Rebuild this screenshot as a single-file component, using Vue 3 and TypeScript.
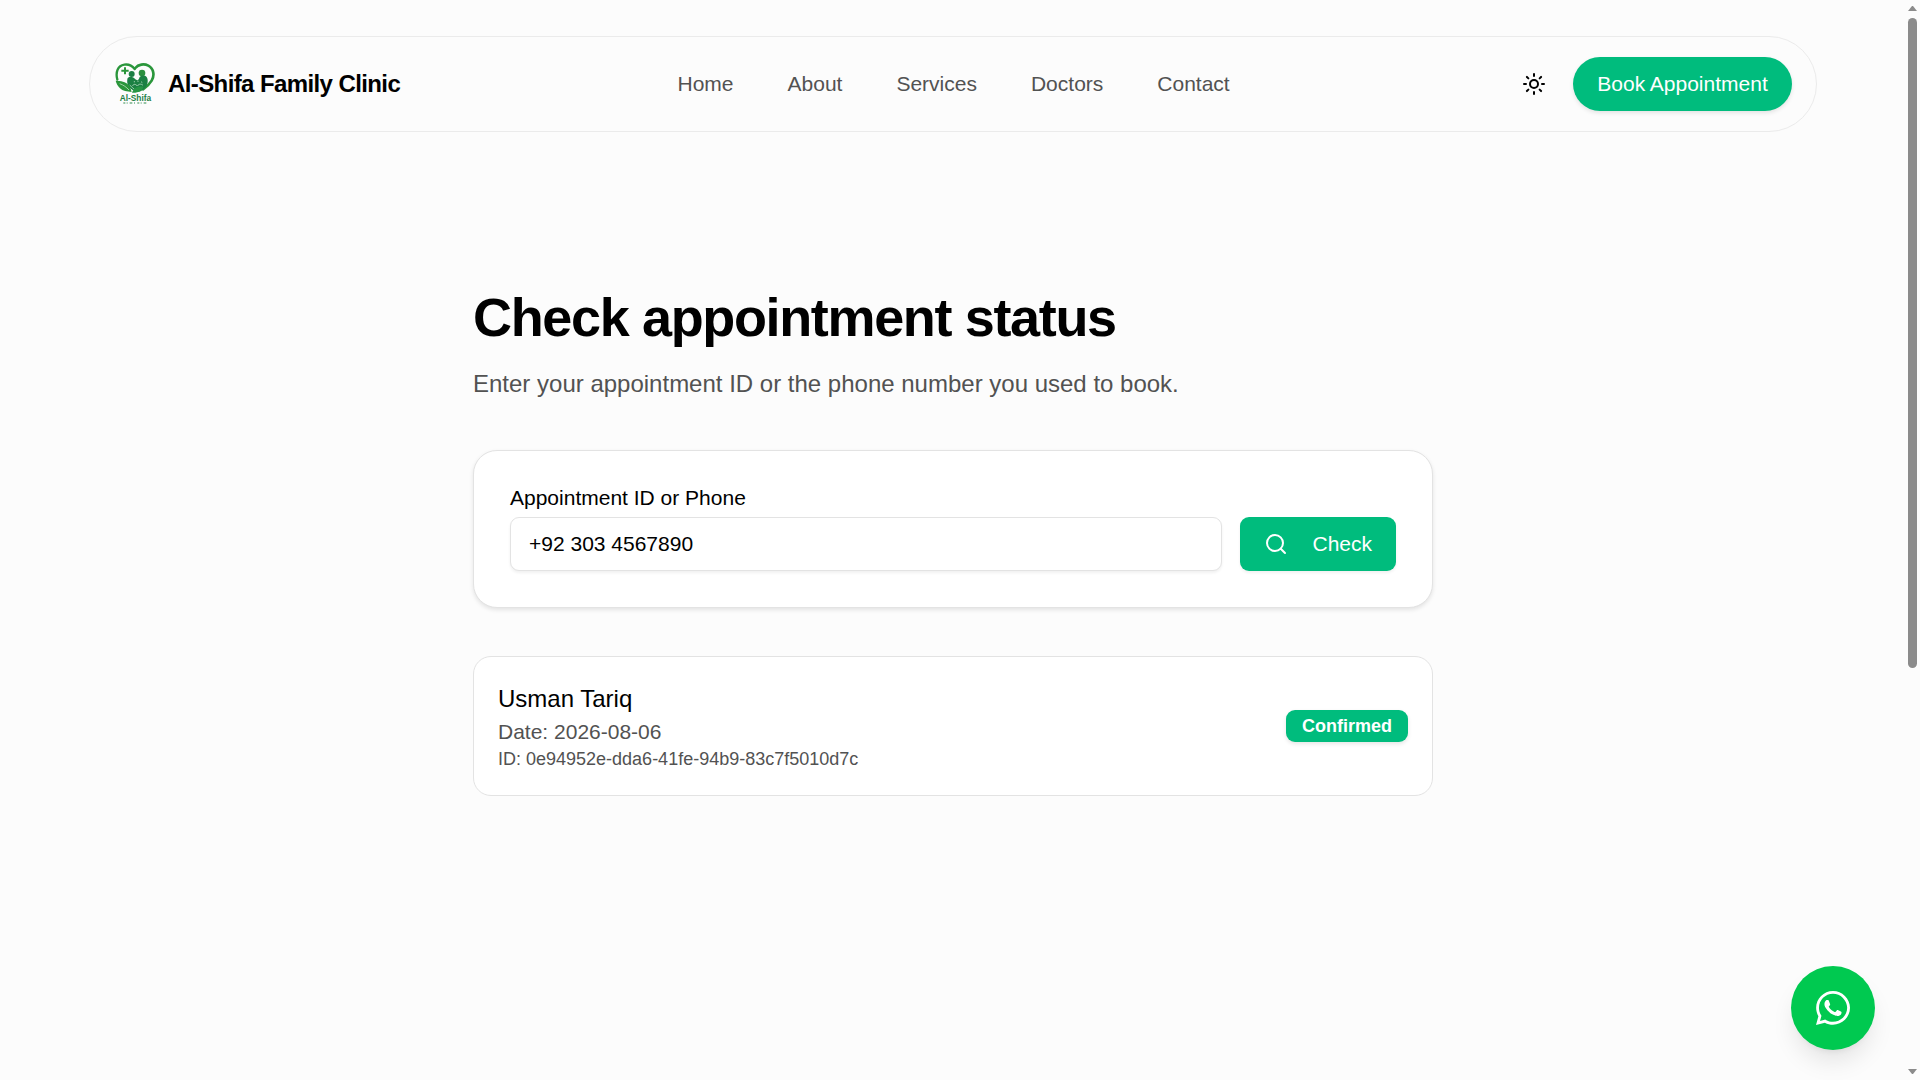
<script setup lang="ts">
import { ref } from 'vue'

interface Appointment {
  id: string
  name: string
  date: string
  status: string
}

const links: string[] = ['Home', 'About', 'Services', 'Doctors', 'Contact']
const query = ref('+92 303 4567890')
const results = ref<Appointment[]>([
  {
    id: '0e94952e-dda6-41fe-94b9-83c7f5010d7c',
    name: 'Usman Tariq',
    date: '2026-08-06',
    status: 'Confirmed',
  },
])
</script>

<template>
  <div class="page">
    <header class="site-header">
      <a href="#" class="brand">
        <svg class="logo" viewBox="27 24 126 126" aria-hidden="true">
          <g fill="none" stroke="#2a963b" stroke-linecap="round">
            <path stroke-width="7" d="M37 74C31 52 38 32 58 29c14-2 24 4 31 13" />
            <path stroke-width="8" d="M91 39c9-11 26-14 39-7 17 9 19 30 10 45-7 12-17 20-26 26" />
          </g>
          <path fill="#2a963b" d="M57 37h6v7h8v6h-8v8h-6v-8h-8v-6h8z" />
          <circle cx="80" cy="57" r="9" fill="#1d7f45" />
          <circle cx="111" cy="54" r="10" fill="#2b8f3f" />
          <path fill="#1b8043" d="M68 69c6-6 17-5 23 4 5 4 8 3 11-2 2-9 15-13 23-5 6 9 3 24-4 32-6 7-14 11-23 13-15-3-26-12-30-23-2-7-2-13 0-19z" />
          <g fill="none" stroke="#d5edda" stroke-width="2">
            <path d="M82 93c5-7 10-6 15 0 5-7 12-7 17-2" />
            <path d="M88 78v4M99 77v4M108 80l4 3" />
            <path d="M74 90c7 7 13 12 20 18" />
          </g>
          <path fill="#2a963b" d="M32 77c15 1 31 3 38 12 5 6 8 13 10 22-14-1-27-3-35-11-7-7-11-15-13-23z" />
          <path fill="none" stroke="#d5edda" stroke-width="2" d="M44 86c11 4 20 10 28 19" />
          <path fill="#279544" d="M81 113c5-13 15-20 34-18-2 12-14 19-34 18z" />
          <text x="44" y="138" class="logo-name">Al-Shifa</text>
          <path stroke="#2e8b4c" stroke-width="3" stroke-dasharray="6 4 3 6 8 5 3 7" d="M55 144h74" />
        </svg>
        <span>Al-Shifa Family Clinic</span>
      </a>

      <nav class="nav" aria-label="Main">
        <a v-for="link in links" :key="link" href="#">{{ link }}</a>
      </nav>

      <div class="actions">
        <button type="button" class="theme-toggle" aria-label="Toggle theme">
          <svg class="icon" viewBox="0 0 24 24" aria-hidden="true">
            <circle cx="12" cy="12" r="4" />
            <path d="M12 2v2M12 20v2M4.93 4.93l1.41 1.41M17.66 17.66l1.41 1.41M2 12h2M20 12h2M6.34 17.66l-1.41 1.41M19.07 4.93l-1.41 1.41" />
          </svg>
        </button>
        <button type="button" class="book">Book Appointment</button>
      </div>
    </header>

    <main class="content">
      <h1>Check appointment status</h1>
      <p class="lead">Enter your appointment ID or the phone number you used to book.</p>

      <form class="search-card" @submit.prevent>
        <div class="field">
          <label for="lookup">Appointment ID or Phone</label>
          <input id="lookup" v-model="query" type="text" />
        </div>
        <button type="submit" class="check">
          <svg class="icon" viewBox="0 0 24 24" aria-hidden="true">
            <circle cx="11" cy="11" r="8" />
            <path d="m21 21-4.3-4.3" />
          </svg>
          <span>Check</span>
        </button>
      </form>

      <article v-for="item in results" :key="item.id" class="result-card">
        <div>
          <div class="name">{{ item.name }}</div>
          <div class="date">Date: {{ item.date }}</div>
          <div class="ident">ID: {{ item.id }}</div>
        </div>
        <span class="badge">{{ item.status }}</span>
      </article>
    </main>

    <a href="#" class="whatsapp" aria-label="Chat on WhatsApp">
      <svg viewBox="0 32 448 448" aria-hidden="true">
        <path d="M380.9 97.1C339 55.1 283.2 32 223.9 32c-122.4 0-222 99.6-222 222 0 39.1 10.2 77.3 29.6 111L0 480l117.7-30.9c32.4 17.7 68.9 27 106.1 27h.1c122.3 0 224.1-99.6 224.1-222 0-59.3-25.2-115-67.1-157zm-157 341.6c-33.2 0-65.7-8.9-94-25.7l-6.7-4-69.8 18.3L72 359.2l-4.4-7c-18.5-29.4-28.2-63.3-28.2-98.2 0-101.7 82.8-184.5 184.6-184.5 49.3 0 95.6 19.2 130.4 54.1 34.8 34.9 56.2 81.2 56.1 130.5 0 101.8-84.9 184.6-186.6 184.6zm101.2-138.2c-5.5-2.8-32.8-16.2-37.9-18-5.1-1.9-8.8-2.8-12.5 2.8-3.7 5.6-14.3 18-17.6 21.8-3.2 3.7-6.5 4.2-12 1.4-32.6-16.3-54-29.1-75.5-66-5.7-9.8 5.7-9.1 16.3-30.3 1.8-3.7.9-6.9-.5-9.7-1.4-2.8-12.5-30.1-17.1-41.2-4.5-10.8-9.1-9.3-12.5-9.3-3.2-.2-6.9-.2-10.6-.2-3.7 0-9.7 1.4-14.8 6.9-5.1 5.6-19.4 19-19.4 46.3 0 27.3 19.9 53.7 22.6 57.4 2.8 3.7 39.1 59.7 94.8 83.8 35.2 15.2 49 16.5 66.6 13.9 10.7-1.6 32.8-13.4 37.4-26.4 4.6-13 4.6-24.1 3.2-26.4-1.3-2.5-5-3.9-10.5-6.6z" />
      </svg>
    </a>

    <div class="scrollbar" aria-hidden="true">
      <svg viewBox="0 0 9 5"><path d="M4 0h1l4 5H0z" /></svg>
      <div class="track"><div class="thumb"></div></div>
      <svg viewBox="0 0 9 5"><path d="M0 0h9L5 5H4z" /></svg>
    </div>
  </div>
</template>

<style>
body {
  margin: 0;
  background: #fcfcfc;
}
</style>

<style scoped>
.page {
  box-sizing: border-box;
  min-height: 100vh;
  padding: 36px 14px 0 0;
  background: #fcfcfc;
  color: #000;
  font-family: "Liberation Sans", Arial, sans-serif;
  font-size: 21px;
}

button,
input {
  font: inherit;
}

button {
  border: 0;
  cursor: pointer;
}

a {
  color: inherit;
  text-decoration: none;
}

.icon {
  width: 24px;
  height: 24px;
  fill: none;
  stroke: currentColor;
  stroke-width: 2;
  stroke-linecap: round;
  stroke-linejoin: round;
}

.site-header {
  box-sizing: border-box;
  display: flex;
  align-items: center;
  justify-content: space-between;
  width: 92%;
  max-width: 1728px;
  margin: 0 auto;
  padding: 20px 24px;
  border: 1px solid #ebebeb;
  border-radius: 48px;
}

.brand {
  display: flex;
  align-items: center;
  gap: 12px;
  font-size: 24px;
  font-weight: 700;
  letter-spacing: -0.025em;
}

.logo {
  width: 42px;
  height: 42px;
}

.logo-name {
  fill: #1d8045;
  font-size: 25px;
  font-weight: 700;
  letter-spacing: 0;
}

.nav {
  display: flex;
  gap: 54px;
  color: #525252;
}

.actions {
  display: flex;
  align-items: center;
  gap: 12px;
}

.theme-toggle {
  display: flex;
  align-items: center;
  justify-content: center;
  width: 54px;
  height: 54px;
  padding: 0;
  border-radius: 9px;
  background: transparent;
  color: #000;
}

.book {
  min-width: 219px;
  height: 54px;
  padding: 0 23px;
  border-radius: 27px;
  background: #00bc7d;
  color: #fff;
  box-shadow: 0 2px 4px rgba(0, 0, 0, 0.1);
}

.content {
  max-width: 960px;
  margin: 0 auto;
  padding: 155px 0 96px;
}

h1 {
  margin: 0;
  font-size: 54px;
  line-height: 60px;
  font-weight: 700;
  letter-spacing: -0.025em;
}

.lead {
  margin: 19px 0 48px;
  color: #525252;
  font-size: 24px;
  line-height: 36px;
}

.search-card {
  display: flex;
  align-items: flex-end;
  gap: 18px;
  padding: 36px;
  border: 1px solid #e3e3e3;
  border-radius: 24px;
  background: #fff;
  box-shadow: 0 2px 4px rgba(0, 0, 0, 0.1);
}

.field {
  display: flex;
  flex: 1;
  flex-direction: column;
  gap: 9px;
}

.field label {
  line-height: 21px;
}

.field input {
  box-sizing: border-box;
  width: 100%;
  height: 54px;
  padding: 0 18px;
  border: 1px solid #e3e3e3;
  border-radius: 9px;
  background: #fff;
  color: #000;
  box-shadow: 0 2px 3px rgba(0, 0, 0, 0.06);
  outline: none;
}

.check {
  display: flex;
  align-items: center;
  gap: 24px;
  height: 54px;
  padding: 0 24px;
  border-radius: 9px;
  background: #00bc7d;
  color: #fff;
  box-shadow: 0 2px 3px rgba(0, 0, 0, 0.06);
}

.result-card {
  display: flex;
  align-items: center;
  justify-content: space-between;
  margin-top: 48px;
  padding: 24px;
  border: 1px solid #e3e3e3;
  border-radius: 18px;
  background: #fff;
}

.name {
  font-size: 24px;
  line-height: 36px;
}

.date {
  color: #525252;
  line-height: 30px;
}

.ident {
  color: #525252;
  font-size: 18px;
  line-height: 24px;
}

.badge {
  padding: 4px 16px;
  border-radius: 9px;
  background: #00bc7d;
  color: #fff;
  font-size: 18px;
  line-height: 24px;
  font-weight: 700;
  box-shadow: 0 2px 4px rgba(0, 0, 0, 0.1);
}

.whatsapp {
  position: fixed;
  right: 45px;
  bottom: 30px;
  display: flex;
  align-items: center;
  justify-content: center;
  width: 84px;
  height: 84px;
  border-radius: 50%;
  background: #00c950;
  box-shadow: 0 15px 24px -4px rgba(0, 0, 0, 0.1), 0 6px 9px -6px rgba(0, 0, 0, 0.1);
}

.whatsapp svg {
  width: 34px;
  height: 34px;
  fill: #fff;
}

.scrollbar {
  position: fixed;
  top: 0;
  right: 0;
  bottom: 0;
  box-sizing: border-box;
  display: flex;
  flex-direction: column;
  align-items: center;
  gap: 7px;
  width: 14px;
  padding: 6px 2px 6px 0;
}

.scrollbar svg {
  width: 9px;
  height: 5px;
  fill: #8b8b8b;
}

.track {
  display: grid;
  flex: 1;
  grid-template-rows: 33fr 20fr;
}

.thumb {
  width: 9px;
  border-radius: 5px;
  background: #8b8b8b;
}
</style>
